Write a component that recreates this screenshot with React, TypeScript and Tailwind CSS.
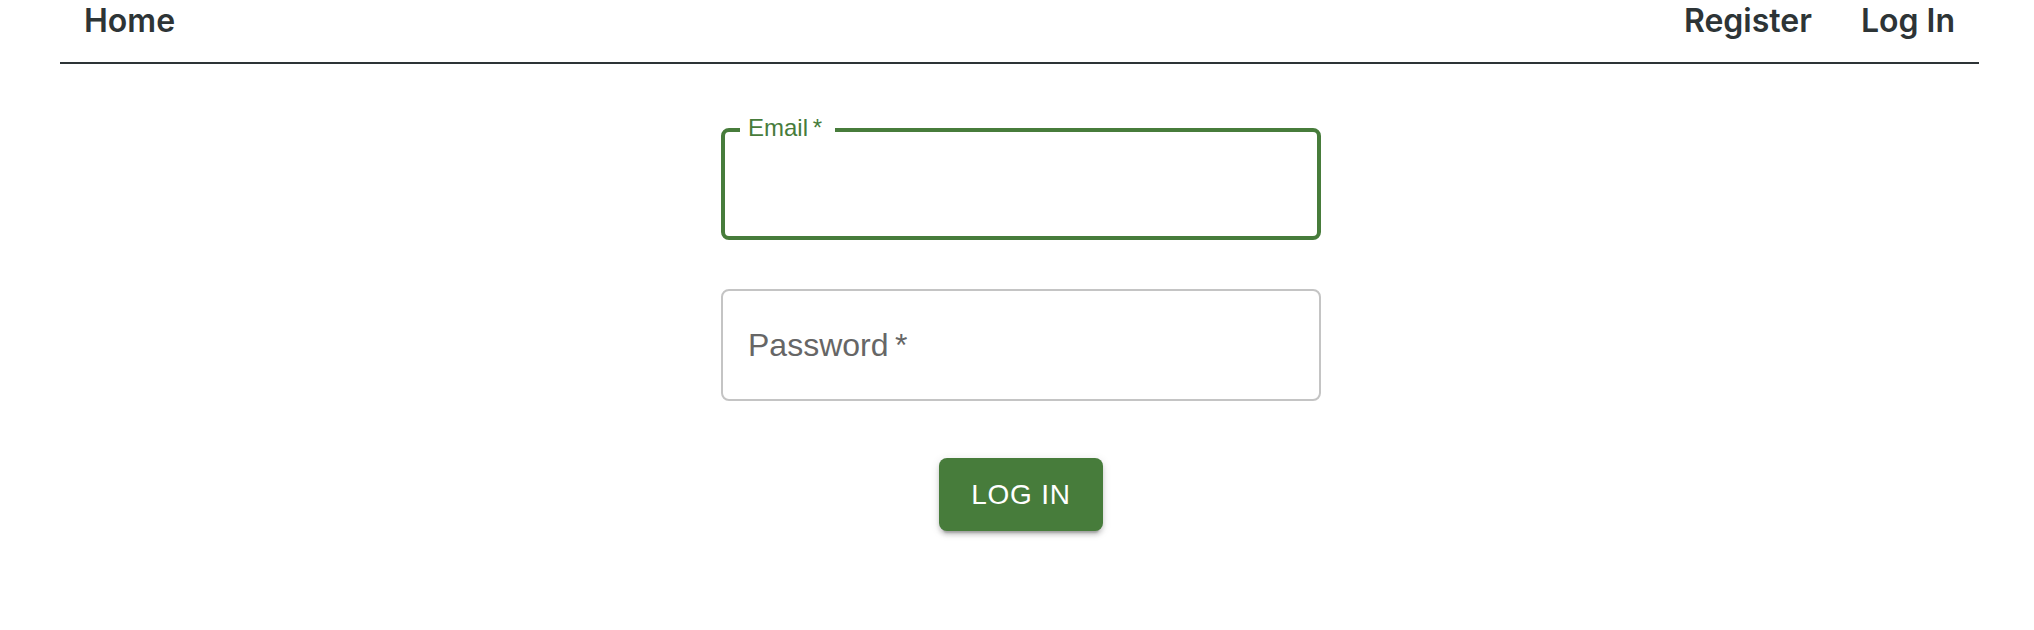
import React from "react";

export default function App() {
  return (
    <div className="min-h-[630px] w-full bg-white">
      <header
        className="ml-[60px] mr-[55px] flex h-[64px] items-start justify-between border-b-2 border-[#2d3436] px-[24px] pt-[1px] text-[32px] font-semibold leading-[40px] text-[#2d3436]"
        style={{ fontFamily: "Inter, 'Liberation Sans', sans-serif" }}
      >
        <a href="#">Home</a>
        <nav className="flex gap-[49px]">
          <a href="#">Register</a>
          <a href="#">Log In</a>
        </nav>
      </header>

      <div className="pl-[8px]">
        <main
          className="mx-auto mt-[64px] flex w-[600px] flex-col items-center"
          style={{ fontFamily: "'Liberation Sans', Arial, sans-serif" }}
        >
          <div className="relative h-[112px] w-full rounded-[8px] border-4 border-[#477c3b]">
            <span className="absolute -top-[16px] left-[15px] bg-white pl-[8px] pr-[13px] text-[24px] leading-[24px] text-[#477c3b]">
              Email{"\u2009"}*
            </span>
          </div>

          <div className="mt-[49px] flex h-[112px] w-full items-center rounded-[8px] border-2 border-[#c4c4c4] pl-[25px] text-[32px] text-[#666666]">
            Password{"\u2009"}*
          </div>

          <button className="mt-[57px] h-[73px] rounded-[8px] bg-[#477c3b] px-[32px] text-[28px] tracking-[0.8px] text-white shadow-[0_6px_2px_-4px_rgba(0,0,0,0.2),0_4px_4px_0_rgba(0,0,0,0.14),0_2px_10px_0_rgba(0,0,0,0.12)]">
            LOG IN
          </button>
        </main>
      </div>
    </div>
  );
}
